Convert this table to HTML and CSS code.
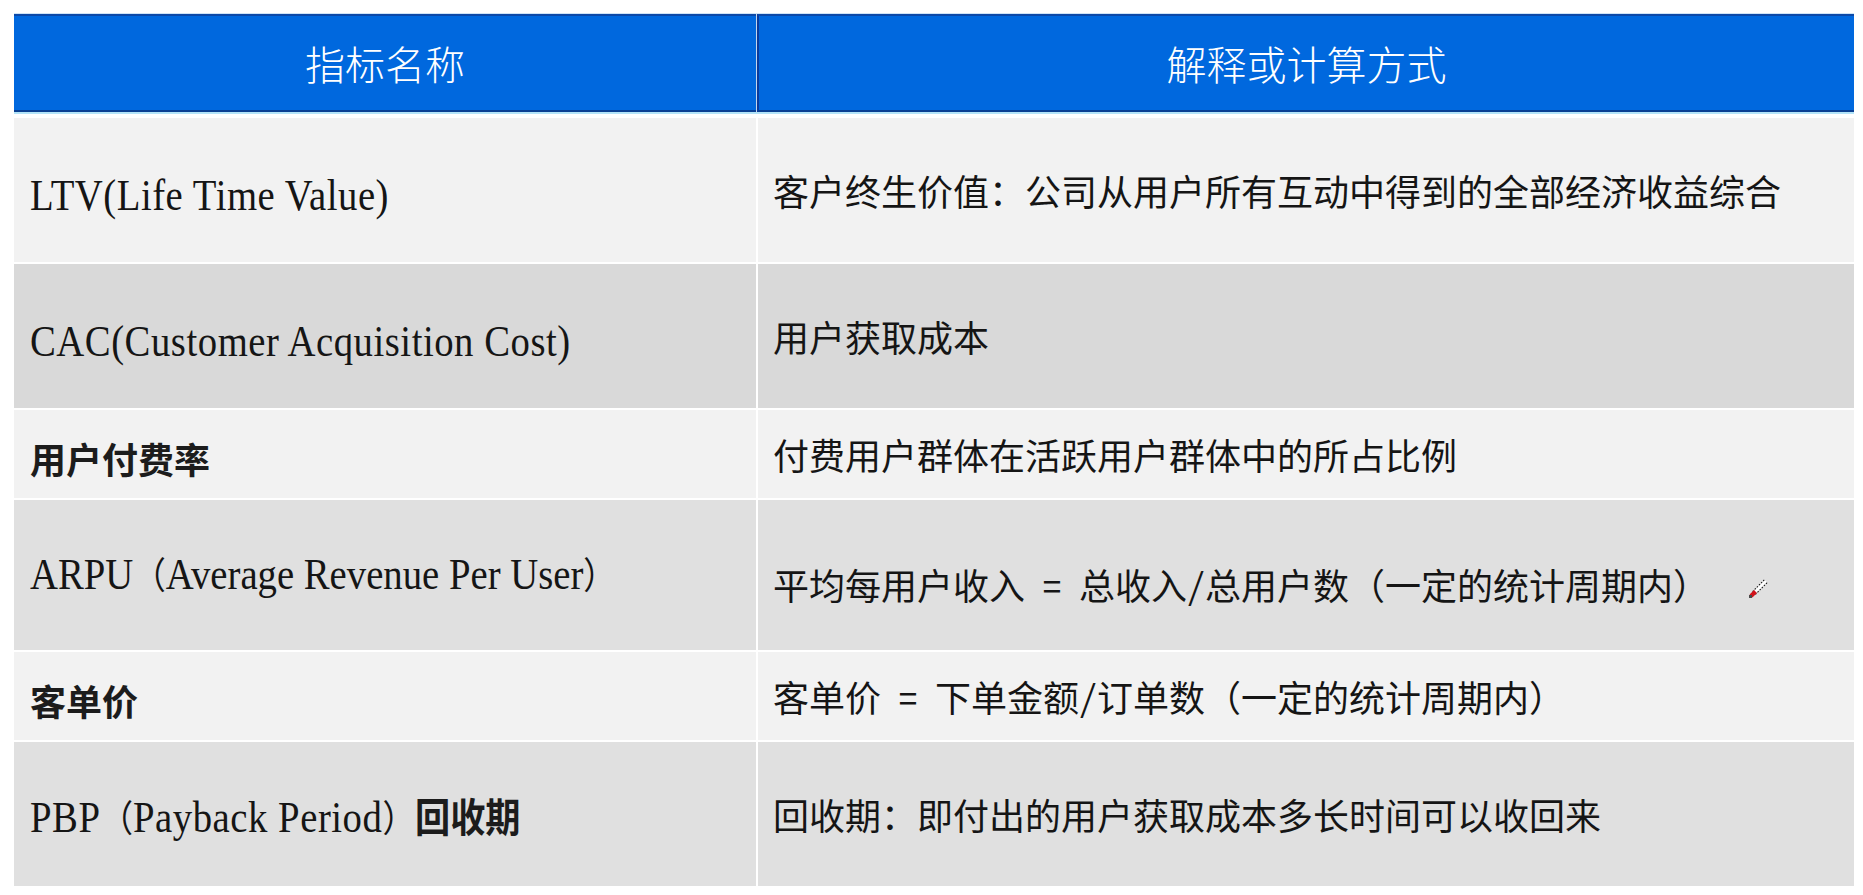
FILE: index.html
```html
<!DOCTYPE html>
<html lang="zh-CN">
<head>
<meta charset="utf-8">
<title>指标名称</title>
<link rel="stylesheet" href="styles.css">
</head>
<body>
<div class="sheet">
  <div class="head">
    <div class="head-cell">指标名称</div>
    <div class="head-cell head-cell--right">解释或计算方式</div>
  </div>
  <div class="body">
    <div class="row row--h144">
      <div class="cell cell--name cell--low cell--light"><span class="latin">LTV(Life Time Value)</span></div>
      <div class="cell cell--desc cell--light">客户终生价值：公司从用户所有互动中得到的全部经济收益综合</div>
    </div>
    <div class="row row--h144">
      <div class="cell cell--name cell--low cell--dark"><span class="latin">CAC(Customer Acquisition Cost)</span></div>
      <div class="cell cell--desc cell--dark">用户获取成本</div>
    </div>
    <div class="row row--h88">
      <div class="cell cell--name cell--light"><span class="cjk">用户付费率</span></div>
      <div class="cell cell--desc cell--light">付费用户群体在活跃用户群体中的所占比例</div>
    </div>
    <div class="row row--h150">
      <div class="cell cell--name cell--mid cell--flat"><span class="latin latin--tight">ARPU<span class="paren">（</span>Average Revenue Per User<span class="paren">）</span></span></div>
      <div class="cell cell--desc cell--mid cell--lower">平均每用户收入 = 总收入/总用户数（一定的统计周期内）</div>
      <svg class="pen" width="22" height="22" viewBox="0 0 22 22" aria-hidden="true">
        <line x1="7" y1="15" x2="19" y2="3" stroke="#111" stroke-width="5" stroke-dasharray="1.5 1.5"/>
        <line x1="7" y1="15" x2="19" y2="3" stroke="#fff" stroke-width="3"/>
        <line x1="4" y1="18" x2="8.5" y2="13.5" stroke="#d3121a" stroke-width="4"/>
        <rect x="2" y="17" width="3" height="3" fill="#4a4a4a"/>
      </svg>
    </div>
    <div class="row row--h88">
      <div class="cell cell--name cell--light"><span class="cjk">客单价</span></div>
      <div class="cell cell--desc cell--light">客单价 = 下单金额/订单数（一定的统计周期内）</div>
    </div>
    <div class="row row--h144">
      <div class="cell cell--name cell--mid"><span class="latin">PBP<span class="paren">（</span>Payback Period<span class="paren">）</span><span class="cjk-in">回收期</span></span></div>
      <div class="cell cell--desc cell--mid">回收期：即付出的用户获取成本多长时间可以收回来</div>
    </div>
  </div>
</div>
</body>
</html>
```

FILE: styles.css
```css
html, body {
  margin: 0;
  padding: 0;
  background: #ffffff;
}

.sheet {
  padding: 14px 0 0 14px;
  width: 1840px;
}

.head {
  display: grid;
  grid-template-columns: 742px 1097px;
  column-gap: 1px;
  background: #c6d6ea;
  border-bottom: 2px solid #b4e4f8;
  margin-bottom: 4px;
  box-shadow: 0 -1px 0 #cfe4f7;
}

.head-cell {
  height: 94px;
  background: #0068de;
  border-top: 2px solid #0c49a8;
  border-bottom: 2px solid #0a3f92;
  display: flex;
  align-items: center;
  justify-content: center;
  color: #ffffff;
  font-family: "Noto Sans CJK SC", sans-serif;
  font-size: 40px;
  font-weight: 300;
}

.head-cell--right {
  border-left: 2px solid #0a3a9c;
}

.body {
  display: flex;
  flex-direction: column;
  row-gap: 2px;
}

.row {
  position: relative;
  display: grid;
  grid-template-columns: 742px 1096px;
  column-gap: 2px;
}

.row--h144 { height: 144px; }
.row--h150 { height: 150px; }
.row--h88 { height: 88px; }

.cell {
  display: flex;
  align-items: center;
  color: #151515;
  white-space: nowrap;
}

.cell--light { background: #f2f2f2; }
.cell--dark { background: #d9d9d9; }
.cell--mid { background: #e0e0e0; }

.cell--name {
  padding-left: 16px;
  padding-top: 8px;
  font-family: "Liberation Serif", "Noto Sans CJK SC", serif;
  font-size: 39px;
}

.cell--low {
  padding-top: 13px;
}

.cell--flat {
  padding-top: 0;
}

.latin {
  display: inline-block;
  font-size: 44px;
  line-height: 1.1;
  letter-spacing: 0.6px;
  transform: scaleX(0.88);
  transform-origin: left center;
}

.latin--tight {
  letter-spacing: 0;
}

.cell--name .cjk {
  font-family: "Noto Sans CJK SC", sans-serif;
  font-size: 36px;
  font-weight: 700;
  color: #1c1c1c;
}

.latin .paren {
  font-family: "Noto Sans CJK SC", sans-serif;
  font-size: 37px;
  letter-spacing: 0;
}

.latin .cjk-in {
  font-family: "Noto Sans CJK SC", sans-serif;
  font-size: 40px;
  font-weight: 700;
  letter-spacing: 0;
  color: #1c1c1c;
}

.cell--desc {
  padding-left: 15px;
  font-family: "Noto Sans Mono CJK SC", "Noto Sans CJK SC", sans-serif;
  font-size: 36px;
  font-weight: 400;
}

.cell--lower {
  padding-top: 18px;
}

.pen {
  position: absolute;
  left: 1733px;
  top: 78px;
}
```
